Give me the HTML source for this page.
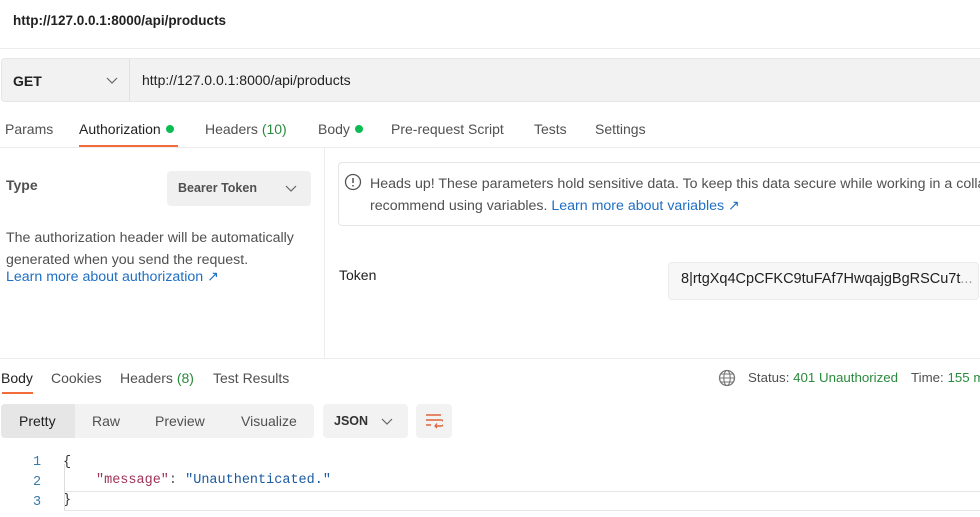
<!DOCTYPE html>
<html><head><style>
*{box-sizing:border-box;margin:0;padding:0}
html,body{width:980px;height:517px;overflow:hidden}
body{background:#fff;font-family:"Liberation Sans",sans-serif;font-size:14px;color:#505050;position:relative}
#w{position:absolute;left:0;top:0;width:980px;height:517px;overflow:hidden}
.a{position:absolute;white-space:nowrap}
.g{color:#2a8a3c}
.dot{display:inline-block;width:8px;height:8px;border-radius:50%;background:#0cbb52;margin-left:5px;vertical-align:1px}
.blue{color:#1f6fc4}
.mono{font-family:"Liberation Mono",monospace;font-size:13.5px}
</style></head><body><div id="w">
<div class="a" style="left:13px;top:13px;font-weight:bold;color:#212121;font-size:13.5px">http://127.0.0.1:8000/api/products</div>
<div class="a" style="left:0;top:48px;width:980px;height:1px;background:#ededed"></div>
<div class="a" style="left:1px;top:58px;width:979px;height:44px;background:#f2f2f2;border:1px solid #e6e6e6;border-right:none;border-radius:4px 0 0 4px"></div>
<div class="a" style="left:129px;top:59px;width:1px;height:42px;background:#e0e0e0"></div>
<div class="a" style="left:13px;top:73px;font-weight:bold;color:#212121">GET</div>
<svg class="a" style="left:106px;top:77px" width="12" height="8"><path d="M1 1l5 5 5-5" stroke="#666" fill="none" stroke-width="1.2"/></svg>
<div class="a" style="left:142px;top:72px;color:#212121">http://127.0.0.1:8000/api/products</div>

<div class="a" style="left:5px;top:121px">Params</div>
<div class="a" style="left:79px;top:121px;color:#212121">Authorization<span class="dot"></span></div>
<div class="a" style="left:79px;top:145px;width:99px;height:2px;background:#f26b3a"></div>
<div class="a" style="left:205px;top:121px">Headers <span class="g">(10)</span></div>
<div class="a" style="left:318px;top:121px">Body<span class="dot"></span></div>
<div class="a" style="left:391px;top:121px">Pre-request Script</div>
<div class="a" style="left:534px;top:121px">Tests</div>
<div class="a" style="left:595px;top:121px">Settings</div>
<div class="a" style="left:0;top:147px;width:980px;height:1px;background:#ededed"></div>
<div class="a" style="left:324px;top:148px;width:1px;height:210px;background:#ededed"></div>

<div class="a" style="left:6px;top:177px;font-weight:bold;color:#505050">Type</div>
<div class="a" style="left:167px;top:171px;width:144px;height:35px;background:#f0f0f0;border-radius:4px"></div>
<div class="a" style="left:178px;top:181px;font-weight:bold;color:#505050;font-size:12.5px">Bearer Token</div>
<svg class="a" style="left:285px;top:185px" width="12" height="8"><path d="M1 1l5 5 5-5" stroke="#666" fill="none" stroke-width="1.2"/></svg>
<div class="a" style="left:6px;top:227px;line-height:22px;font-size:14.2px">The authorization header will be automatically<br>generated when you send the request.</div>
<div class="a blue" style="left:6px;top:269px;font-size:14.2px">Learn more about authorization ↗</div>

<div class="a" style="left:338px;top:162px;width:642px;height:64px;border:1px solid #e6e6e6;border-right:none;border-radius:4px 0 0 4px"></div>
<svg class="a" style="left:344px;top:173px" width="18" height="18"><circle cx="9" cy="9" r="7.5" stroke="#555" fill="none" stroke-width="1.3"/><path d="M9 5v5M9 12v1.5" stroke="#555" stroke-width="1.5"/></svg>
<div class="a" style="left:370px;top:173px;width:610px;overflow:hidden;line-height:22px;font-size:14.2px">Heads up! These parameters hold sensitive data. To keep this data secure while working in a collaborative<br>recommend using variables. <span class="blue">Learn more about variables ↗</span></div>
<div class="a" style="left:339px;top:267px;color:#212121">Token</div>
<div class="a" style="left:668px;top:262px;width:311px;height:38px;background:#f7f7f7;border:1px solid #ebebeb;border-radius:4px"></div>
<div class="a" style="left:681px;top:271px;color:#212121;font-size:14.5px">8|rtgXq4CpCFKC9tuFAf7HwqajgBgRSCu7t<span style="color:#999">...</span></div>

<div class="a" style="left:0;top:358px;width:980px;height:1px;background:#ededed"></div>
<div class="a" style="left:1px;top:370px;color:#212121">Body</div>
<div class="a" style="left:2px;top:392px;width:31px;height:2px;background:#f26b3a"></div>
<div class="a" style="left:51px;top:370px">Cookies</div>
<div class="a" style="left:120px;top:370px">Headers <span class="g">(8)</span></div>
<div class="a" style="left:213px;top:370px">Test Results</div>
<svg class="a" style="left:718px;top:369px" width="18" height="18"><circle cx="9" cy="9" r="7.5" stroke="#777" fill="none" stroke-width="1.3"/><ellipse cx="9" cy="9" rx="3.2" ry="7.5" stroke="#777" fill="none" stroke-width="1.1"/><path d="M1.5 9h15M3 5h12M3 13h12" stroke="#777" stroke-width="1.1"/></svg>
<div class="a" style="left:748px;top:370px;font-size:13.3px">Status: <span class="g">401 Unauthorized</span></div>
<div class="a" style="left:911px;top:370px;width:69px;overflow:hidden;font-size:13.3px">Time: <span class="g">155 ms</span></div>

<div class="a" style="left:1px;top:404px;width:313px;height:34px;background:#f2f2f2;border-radius:4px"></div>
<div class="a" style="left:1px;top:404px;width:74px;height:34px;background:#e6e6e6;border-radius:4px 0 0 4px"></div>
<div class="a" style="left:19px;top:413px;color:#212121">Pretty</div>
<div class="a" style="left:92px;top:413px">Raw</div>
<div class="a" style="left:155px;top:413px">Preview</div>
<div class="a" style="left:241px;top:413px">Visualize</div>
<div class="a" style="left:323px;top:404px;width:85px;height:34px;background:#f2f2f2;border-radius:4px"></div>
<div class="a" style="left:334px;top:414px;font-weight:bold;color:#333;font-size:12.5px">JSON</div>
<svg class="a" style="left:381px;top:418px" width="12" height="8"><path d="M1 1l5 5 5-5" stroke="#666" fill="none" stroke-width="1.2"/></svg>
<div class="a" style="left:416px;top:404px;width:36px;height:34px;background:#f2f2f2;border-radius:4px"></div>
<svg class="a" style="left:425px;top:413px" width="18" height="16"><path d="M1 2h15M1 7h15a3 3 0 0 1 0 6h-5M1 12h5" stroke="#e0633a" fill="none" stroke-width="1.4"/><path d="M12 10.5l-2 2.5 2 2" stroke="#e0633a" fill="none" stroke-width="1.3"/></svg>

<div class="a mono" style="left:33px;top:453px;color:#3a7aa8;line-height:20px">1<br>2<br>3</div>
<div class="a mono" style="left:63px;top:453px;color:#333;line-height:20px">{</div>
<div class="a mono" style="left:96px;top:473px"><span style="color:#a0325a">"message"</span>: <span style="color:#1b5aa0">"Unauthenticated."</span></div>
<div class="a mono" style="left:63px;top:493px;color:#333">}</div>
<div class="a" style="left:64px;top:464px;width:1px;height:46px;background:#ddd"></div>
<div class="a" style="left:64px;top:491px;width:916px;height:1px;background:#e6e6e6"></div>
<div class="a" style="left:64px;top:510px;width:916px;height:1px;background:#e6e6e6"></div>
</div></body></html>
